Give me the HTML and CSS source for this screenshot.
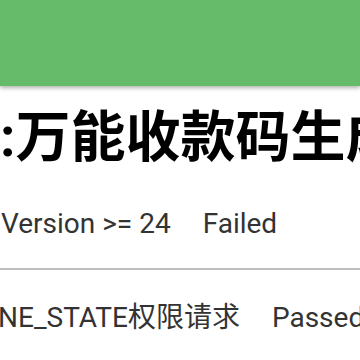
FILE: index.html
```html
<!DOCTYPE html>
<html lang="zh">
<head>
  <meta charset="UTF-8">
  <meta name="viewport" content="width=device-width, initial-scale=1.0">
  <title>检测</title>
  <link rel="stylesheet" href="styles.css">
</head>
<body>
  <div class="toolbar"></div>

  <div class="content">
    <h1 class="app-title">:万能收款码生成器</h1>

    <div class="check-row">
      <span class="check-name">Version &gt;= 24</span>
      <span class="check-result">Failed</span>
    </div>

    <div class="divider"></div>

    <div class="check-row check-row-cut">
      <span class="check-name">NE_STATE权限请求</span>
      <span class="check-result">Passed</span>
    </div>
  </div>
</body>
</html>
```

FILE: styles.css
```css
body {
  margin: 0;
  background-color: #ffffff;
  font-family: Roboto, "Noto Sans CJK SC", sans-serif;
  overflow: hidden;
}

.toolbar {
  height: 86px;
  background-color: #66bb6a;
  box-shadow: 0 2px 4px rgba(0, 0, 0, 0.3);
}

.content {
  padding-top: 18px;
}

.app-title {
  margin: 0;
  font-size: 55px;
  line-height: 66px;
  font-weight: bold;
  color: #000000;
  white-space: nowrap;
}

.check-row {
  display: flex;
  gap: 32px;
  margin-top: 36px;
  padding-left: 1px;
  font-size: 28px;
  line-height: 36px;
  color: #333333;
  white-space: nowrap;
}

.check-row-cut {
  margin-top: 30px;
  padding-left: 0;
  margin-left: -2px;
}

.divider {
  height: 2px;
  margin-top: 26px;
  background-color: #bdbdbd;
}
```
